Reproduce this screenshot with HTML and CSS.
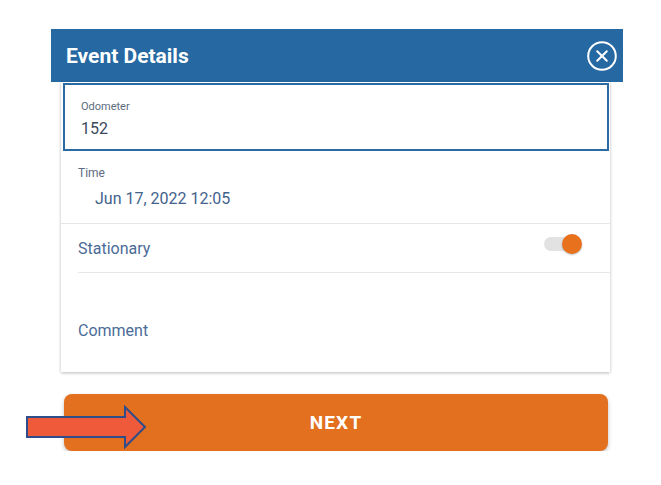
FILE: index.html
```html
<!DOCTYPE html>
<html>
<head>
<meta charset="utf-8">
<link rel="stylesheet" href="styles.css">
</head>
<body>
<div class="dialog">
  <div class="header">
    <span class="title">Event Details</span>
    <svg class="close" width="30" height="30" viewBox="0 0 30 30">
      <circle cx="15" cy="15" r="13.8" fill="none" stroke="#fff" stroke-width="2"/>
      <path d="M10.2 10.2 L19.8 19.8 M19.8 10.2 L10.2 19.8" stroke="#fff" stroke-width="2" stroke-linecap="round"/>
    </svg>
  </div>
  <div class="card">
    <div class="field focused">
      <div class="label small">Odometer</div>
      <div class="value dark">152</div>
    </div>
    <div class="field time">
      <div class="label">Time</div>
      <div class="value indent">Jun 17, 2022 12:05</div>
    </div>
    <div class="row">
      <span class="text">Stationary</span>
      <span class="toggle"><span class="track"></span><span class="thumb"></span></span>
    </div>
    <div class="comment"><span class="text">Comment</span></div>
  </div>
  <div class="actions">
    <button class="next">NEXT</button>
    <svg class="arrow" width="126" height="46" viewBox="0 0 126 46">
      <path d="M2 12 H100 V2 L120 22 L100 42 V32 H2 Z" fill="#ef5a3a" stroke="#2f4d8b" stroke-width="2" stroke-linejoin="miter"/>
    </svg>
  </div>
</div>
</body>
</html>
```
FILE: styles.css
```css
html, body {
  margin: 0;
  padding: 0;
  background: #ffffff;
}
body {
  font-family: Roboto, "Noto Sans", Arial, sans-serif;
}
.dialog {
  width: 572px;
  margin-left: 51px;
  padding-top: 29px;
}
.header {
  height: 53px;
  background: #2568a2;
  display: flex;
  align-items: center;
  justify-content: space-between;
  padding: 0 6px 0 15px;
}
.title {
  color: #ffffff;
  font-size: 21px;
  font-weight: 700;
}
.close {
  display: block;
  margin-top: 1px;
}
.card {
  margin: 0 13px 0 10px;
  background: #ffffff;
  box-shadow: 0 1px 3px rgba(0, 0, 0, 0.28);
  padding-top: 1px;
}
.field.focused {
  margin: 0 1px 0 2px;
  border: 2px solid #2b6aa3;
  padding: 15px 16px 10px;
}
.label {
  font-size: 12px;
  line-height: 14px;
  color: #5d6c80;
}
.label.small {
  font-size: 11px;
  line-height: 13px;
}
.value {
  font-size: 16px;
  line-height: 20px;
  color: #43628d;
  margin-top: 6px;
}
.value.dark {
  color: #3a495c;
}
.field.time {
  padding: 15px 16px 14px 17px;
  border-bottom: 1px solid #e6e6e6;
}
.field.time .value {
  margin-top: 9px;
}
.value.indent {
  padding-left: 17px;
}
.text {
  font-size: 16px;
  line-height: 20px;
  color: #4b6b97;
}
.row {
  height: 48px;
  margin-left: 17px;
  padding-right: 28px;
  display: flex;
  align-items: center;
  justify-content: space-between;
  border-bottom: 1px solid #e6e6e6;
}
.row .text {
  margin-top: 2px;
}
.toggle {
  position: relative;
  width: 38px;
  height: 20px;
  margin-bottom: 8px;
}
.track {
  position: absolute;
  left: 0;
  top: 3px;
  width: 34px;
  height: 14px;
  border-radius: 7px;
  background: #e2e2e2;
}
.thumb {
  position: absolute;
  right: 0;
  top: 0;
  width: 20px;
  height: 20px;
  border-radius: 50%;
  background: #e8711e;
  box-shadow: 0 1px 2px rgba(0, 0, 0, 0.25);
}
.comment {
  padding: 48px 17px 31px;
}
.actions {
  position: relative;
  margin-top: 22px;
}
.next {
  display: block;
  margin-left: 13px;
  width: 544px;
  height: 57px;
  border: none;
  border-radius: 8px;
  background: #e2701f;
  color: #ffffff;
  font-family: Roboto, "Noto Sans", Arial, sans-serif;
  font-size: 19px;
  font-weight: 700;
  letter-spacing: 1.2px;
  box-shadow: 0 2px 4px rgba(0, 0, 0, 0.25);
}
.arrow {
  position: absolute;
  left: -26px;
  top: 11px;
}
```
